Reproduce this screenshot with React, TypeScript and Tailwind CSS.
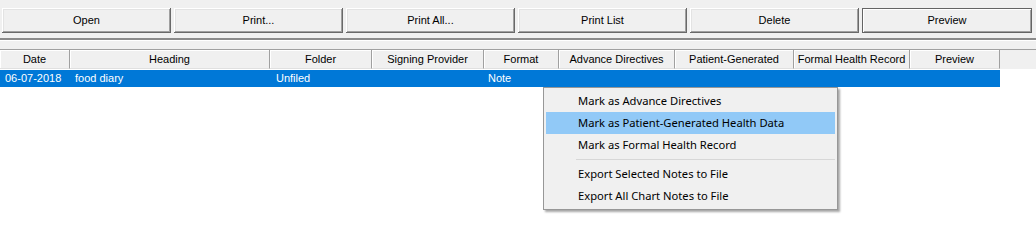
const buttons = ['Open', 'Print...', 'Print All...', 'Print List', 'Delete', 'Preview'];

const columns = [
  { label: 'Date', w: 'w-[70px]' },
  { label: 'Heading', w: 'w-[200px]' },
  { label: 'Folder', w: 'w-[102px]' },
  { label: 'Signing Provider', w: 'w-[112px]' },
  { label: 'Format', w: 'w-[75px]' },
  { label: 'Advance Directives', w: 'w-[116px]' },
  { label: 'Patient-Generated', w: 'w-[119px]' },
  { label: 'Formal Health Record', w: 'w-[116px]' },
  { label: 'Preview', w: 'w-[90px]' },
];

const row = [
  { text: '06-07-2018', cls: 'w-[70px] pl-[5px]' },
  { text: 'food diary', cls: 'w-[200px] pl-[5px]' },
  { text: 'Unfiled', cls: 'w-[102px] pl-[6px]' },
  { text: '', cls: 'w-[112px]' },
  { text: 'Note', cls: 'w-[75px] pl-[4px]' },
];

const menuTop = ['Mark as Advance Directives', 'Mark as Patient-Generated Health Data', 'Mark as Formal Health Record'];
const menuBottom = ['Export Selected Notes to File', 'Export All Chart Notes to File'];

function App() {
  return (
    <div className="w-[1036px] h-[241px] bg-white relative overflow-hidden text-[11px] text-black" style={{ fontFamily: '"Liberation Sans", Arial, sans-serif' }}>
      {/* Toolbar */}
      <div className="bg-[#f0f0f0] pt-[8px]">
        <div className="flex gap-[3px] pl-[2px]">
          {buttons.map((b) =>
            b === 'Preview' ? (
              <div
                key={b}
                className="w-[170px] h-[25px] flex items-center justify-center border border-[#646464] bg-[#f0f0f0] shadow-[inset_1px_1px_#fff,inset_-1px_-1px_#a0a0a0]"
              >
                {b}
              </div>
            ) : (
              <div
                key={b}
                className="w-[169px] h-[25px] flex items-center justify-center bg-[#f0f0f0] shadow-[inset_-1px_-1px_#696969,inset_1px_1px_#fff,inset_-2px_-2px_#a0a0a0,inset_2px_2px_#e3e3e3]"
              >
                {b}
              </div>
            )
          )}
        </div>
        <div className="mt-[5px] h-[3px] border-t-2 border-[#8a8a8a] border-b border-b-white"></div>
        <div className="h-[8px]"></div>
        {/* Header */}
        <div className="flex h-[20px] border-t border-[#a0a0a0] bg-[#f0f0f0]">
          {columns.map((c) => (
            <div key={c.label} className={`${c.w} shrink-0 flex items-center justify-center border-r border-[#a0a0a0] border-b border-b-[#e0e0e0] shadow-[inset_1px_1px_#fff]`}>
              {c.label}
            </div>
          ))}
        </div>
      </div>
      {/* Row */}
      <div className="bg-white pt-[1px]">
        <div className="w-[1000px] h-[17px] bg-[#0078d7] text-white flex items-center">
          {row.map((c, i) => (
            <div key={i} className={`${c.cls} shrink-0 whitespace-nowrap`}>
              {c.text}
            </div>
          ))}
        </div>
      </div>
      {/* Context menu */}
      <div
        className="absolute left-[543px] top-[87px] w-[295px] bg-[#f0f0f0] border border-[#979797] py-[2px] px-[2px] shadow-[2px_2px_2px_rgba(0,0,0,0.35)] text-[11.2px]"
        style={{ fontFamily: '"Noto Sans", "Open Sans", sans-serif' }}
      >
        {menuTop.map((m) => (
          <div
            key={m}
            className={`h-[22px] flex items-center pl-[32px] ${m.includes('Patient') ? 'bg-[#91c9f7]' : ''}`}
          >
            {m}
          </div>
        ))}
        <div className="h-[7px] flex items-center pl-[30px]">
          <div className="h-[1px] w-full bg-[#d7d7d7]"></div>
        </div>
        {menuBottom.map((m) => (
          <div key={m} className="h-[22px] flex items-center pl-[32px]">
            {m}
          </div>
        ))}
      </div>
    </div>
  );
}

export default App;
